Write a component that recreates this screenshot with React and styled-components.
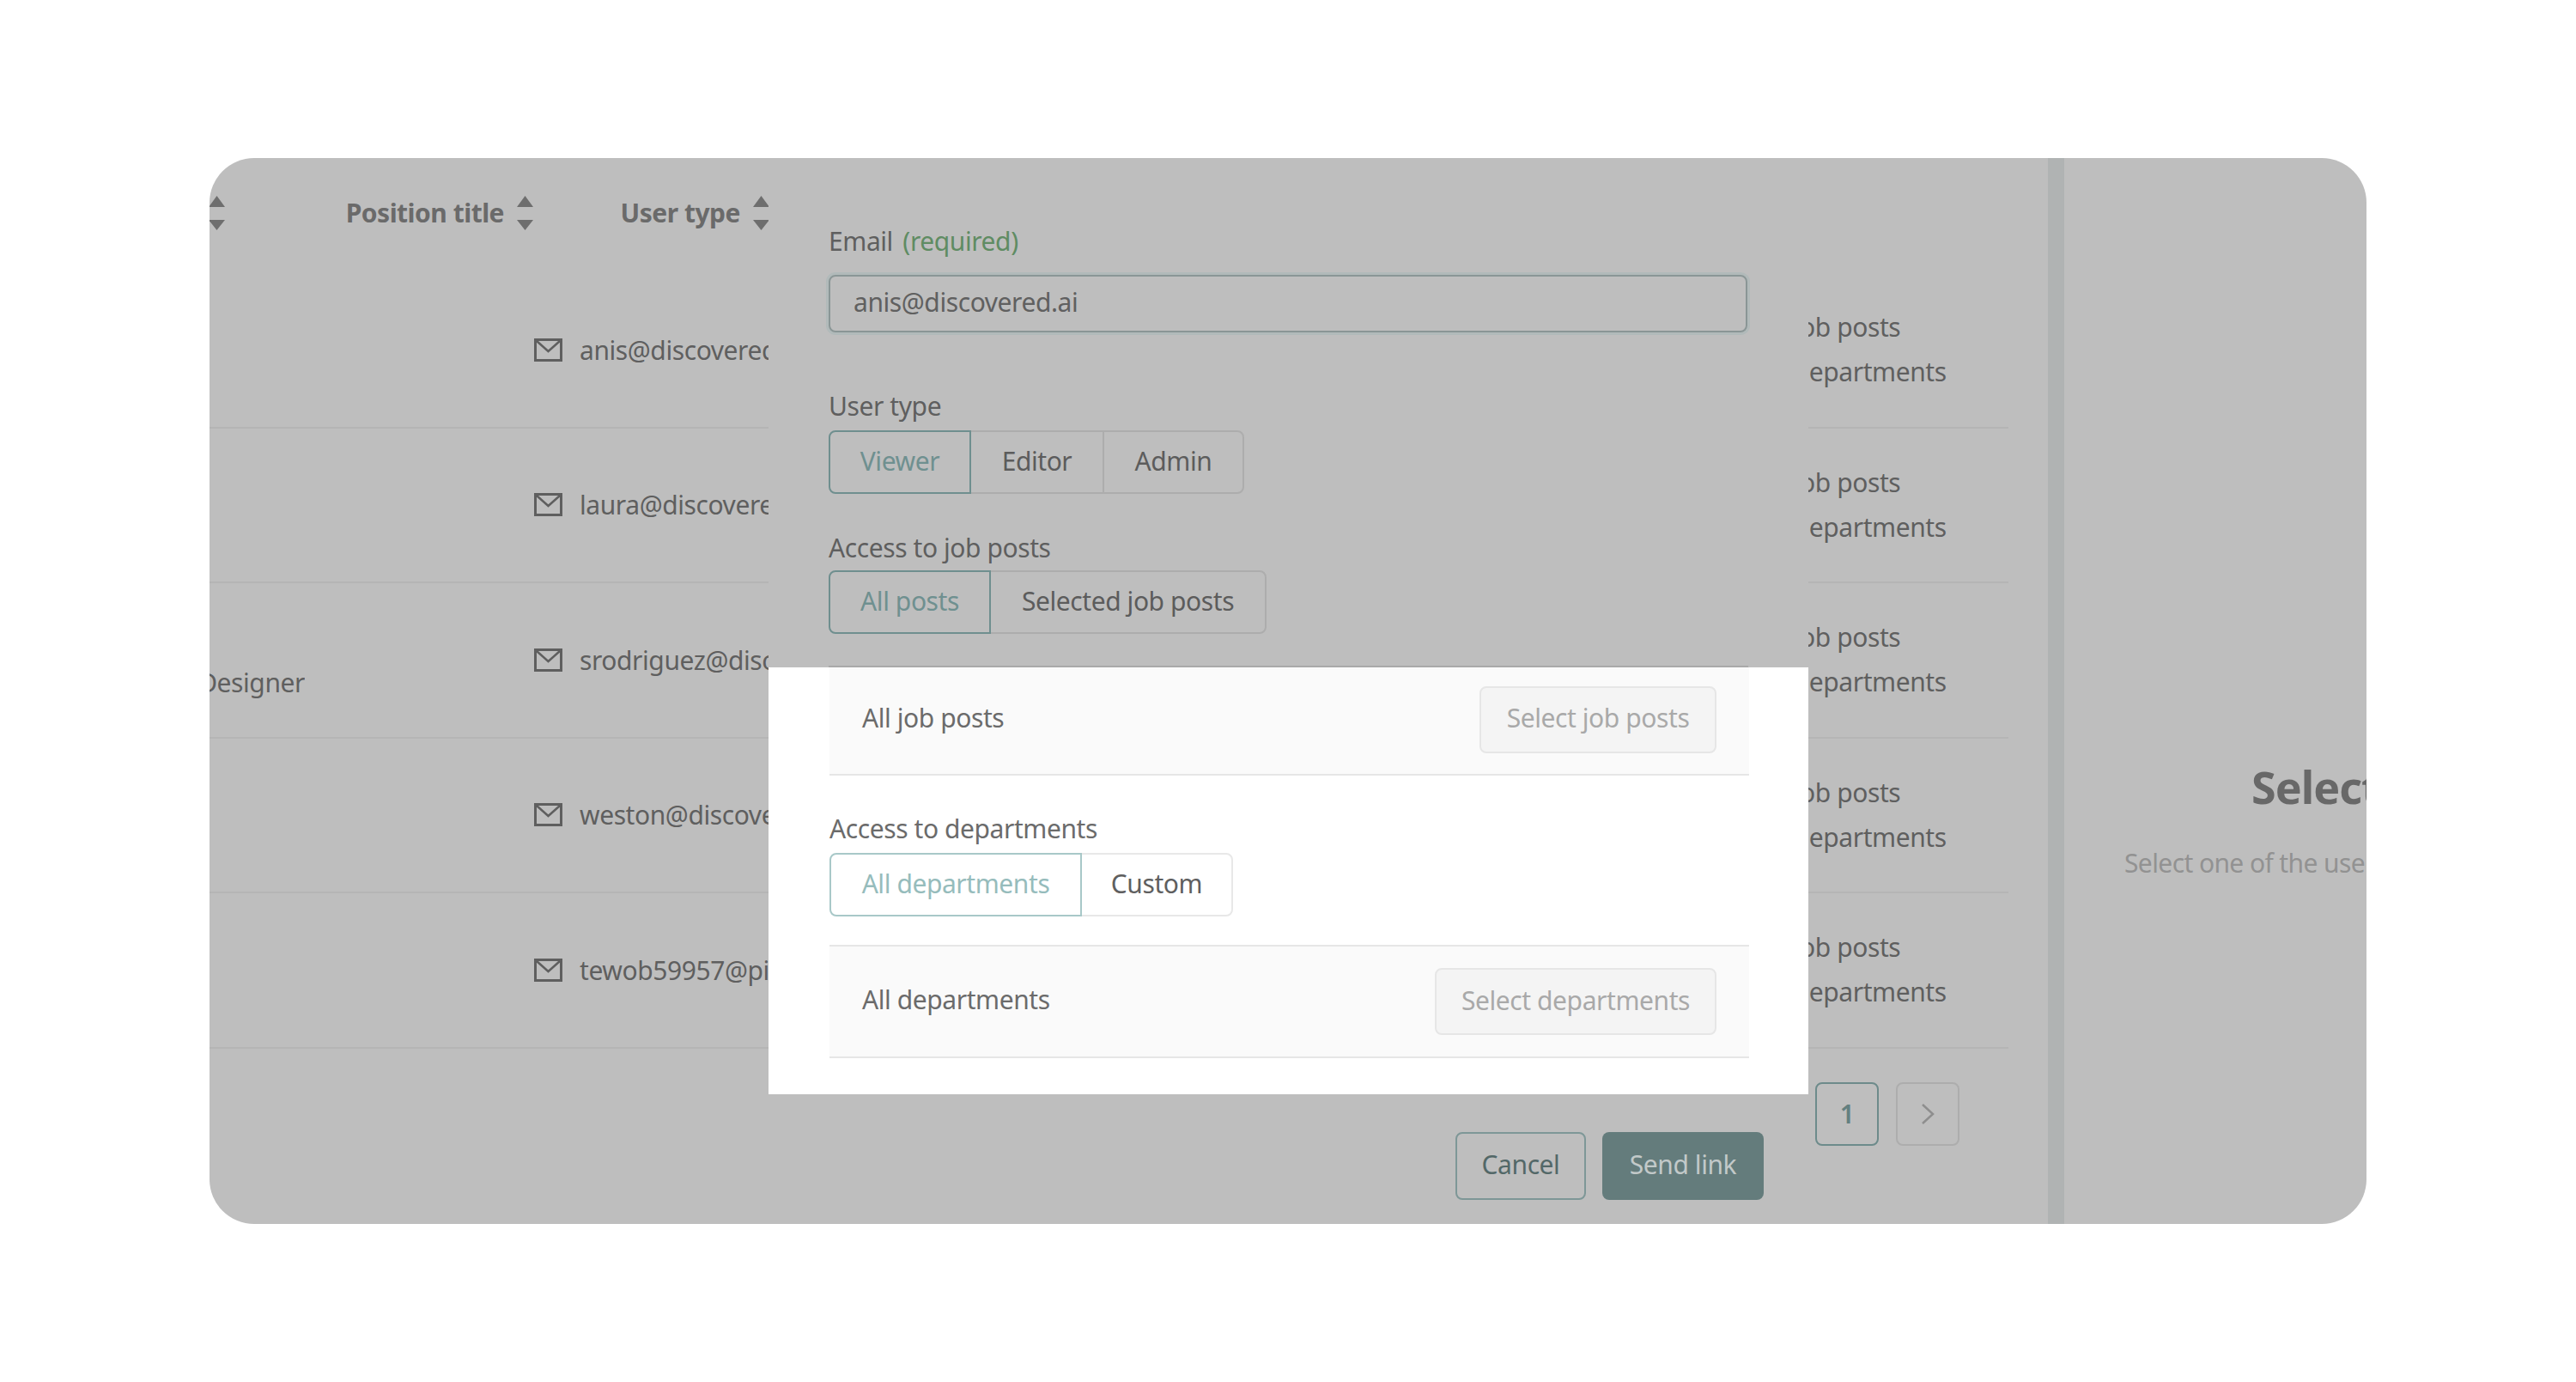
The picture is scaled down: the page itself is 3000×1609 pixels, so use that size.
import React from "react";
import styled, { createGlobalStyle } from "styled-components";

const Global = createGlobalStyle`
  html, body { margin: 0; padding: 0; background: #fff; }
  body { font-family: "Noto Sans", "Open Sans", sans-serif; font-size: 30px; letter-spacing: -0.42px; }
  * { box-sizing: border-box; }
`;

const Page = styled.div`
  width: 3000px;
  height: 1609px;
  padding: 184px 244px 0;
`;

const Card = styled.div`
  position: relative;
  display: flex;
  width: 2512px;
  height: 1241px;
  border-radius: 52px;
  overflow: hidden;
  background: #bebebe;
  color: #5f5f5f;
`;

const TablePane = styled.div`
  width: 2141px;
  flex: none;
  display: flex;
  flex-direction: column;
`;

const Strip = styled.div`
  width: 19px;
  flex: none;
  background: #b0b3b3;
`;

const DetailPane = styled.div`
  flex: 1;
  min-width: 0;
  overflow: hidden;
  white-space: nowrap;
  padding: 702px 0 0 70px;
`;

const DetailTitle = styled.div`
  font-size: 52px;
  font-weight: 700;
  line-height: 60px;
  letter-spacing: -1px;
  color: #686868;
  margin-left: 148px;
`;

const DetailText = styled.div`
  font-size: 30px;
  line-height: 44px;
  letter-spacing: -0.6px;
  color: #929292;
  margin-top: 37px;
`;

const HeaderRow = styled.div`
  height: 134px;
  padding-bottom: 7px;
  display: grid;
  grid-template-columns: 18px 359px 275px;
  align-items: center;
`;

const HeaderCell = styled.div`
  display: flex;
  justify-content: flex-end;
  align-items: center;
  gap: 15px;
  min-width: 0;
  font-weight: 700;
  white-space: nowrap;
  letter-spacing: -0.5px;
  color: #6a6a6a;
`;

const Row = styled.div`
  width: 2095px;
  height: 180.5px;
  display: flex;
  align-items: center;
  border-bottom: 2px solid #b5b5b5;
`;

const RoleCell = styled.div`
  width: 378px;
  flex: none;
`;

const RoleText = styled.div`
  width: 111px;
  display: flex;
  justify-content: flex-end;
  overflow: hidden;
  white-space: nowrap;
  padding-top: 52px;
`;

const EmailCell = styled.div`
  width: 1426px;
  flex: none;
  display: flex;
  align-items: center;
  gap: 20px;
  white-space: nowrap;
`;

const AccessCell = styled.div`
  line-height: 52px;
  white-space: nowrap;
`;

const Pager = styled.div`
  display: flex;
  justify-content: flex-end;
  gap: 20px;
  margin-top: 39px;
  padding-right: 103px;
`;

const PageButton = styled.div`
  width: 74px;
  height: 74px;
  display: flex;
  align-items: center;
  justify-content: center;
  border-radius: 8px;
  border: 2px solid ${(p) => (p.$active ? "#6d8b8b" : "#adadad")};
  color: #648080;
  font-weight: 600;
`;

const Modal = styled.div`
  position: absolute;
  left: 651px;
  top: 0;
  bottom: 0;
  width: 1211px;
  display: flex;
  flex-direction: column;
`;

const ModalTop = styled.div`
  height: 593px;
  flex: none;
  display: flex;
  flex-direction: column;
  align-items: flex-start;
  padding: 75px 71px 0 70px;
  background: #bebebe;
`;

const ModalMiddle = styled.div`
  height: 497px;
  flex: none;
  padding: 0 69px 0 71px;
  background: #fff;
  color: #6b6b6b;
`;

const ModalBottom = styled.div`
  flex: 1;
  display: flex;
  justify-content: flex-end;
  align-items: flex-start;
  gap: 19px;
  padding: 44px 52px 0 0;
  background: #bebebe;
`;

const Label = styled.div`
  line-height: 44px;
  height: 44px;
  padding-bottom: 4px;
  margin-top: ${(p) => p.$gap || 0}px;
  white-space: nowrap;
`;

const Required = styled.span`
  margin-left: 4px;
  color: #5f8c63;
`;

const EmailInput = styled.div`
  width: 100%;
  height: 67px;
  margin-top: 17px;
  display: flex;
  align-items: center;
  padding: 0 27px 5px;
  border: 2px solid #8a9696;
  border-radius: 8px;
  box-shadow: 0 0 0 3px #b1baba;
  color: #606060;
`;

const Segments = styled.div`
  display: flex;
  margin-top: ${(p) => p.$gap}px;
`;

const Segment = styled.div`
  width: ${(p) => p.$w}px;
  height: 74px;
  flex: none;
  display: flex;
  align-items: center;
  justify-content: center;
  padding-bottom: 4px;
  margin-left: -2px;
  border: 2px solid ${(p) => (p.$active ? (p.$light ? "#a8c8c8" : "#6f8f8f") : p.$light ? "#e8e8e8" : "#adadad")};
  color: ${(p) => (p.$active ? (p.$light ? "#96bcbc" : "#6f9090") : p.$light ? "#5f5f5f" : "#5c5c5c")};
  position: relative;
  z-index: ${(p) => (p.$active ? 1 : 0)};
  &:first-child { margin-left: 0; border-radius: 8px 0 0 8px; }
  &:last-child { border-radius: 0 8px 8px 0; }
`;

const DimRule = styled.div`
  width: 1071px;
  height: 2px;
  margin-top: auto;
  background: #a9a9a9;
`;

const Panel = styled.div`
  height: ${(p) => p.$h}px;
  margin-top: ${(p) => p.$gap || 0}px;
  display: flex;
  align-items: center;
  justify-content: space-between;
  padding: 0 38px ${(p) => p.$lift || 0}px 38px;
  background: #fafafa;
  border-top: ${(p) => (p.$ruled ? "2px solid #e6e6e6" : "0")};
  border-bottom: 2px solid #e6e6e6;
`;

const PanelText = styled.span`
  padding-bottom: 5px;
`;

const SelectButton = styled.div`
  width: ${(p) => p.$w}px;
  height: 78px;
  display: flex;
  align-items: center;
  justify-content: center;
  padding-bottom: 4px;
  background: #f4f4f4;
  border: 2px solid #e6e6e6;
  border-radius: 8px;
  color: #a9a9a9;
`;

const CancelButton = styled.div`
  width: 152px;
  height: 79px;
  display: flex;
  align-items: center;
  justify-content: center;
  padding-bottom: 5px;
  border: 2px solid #7e9797;
  border-radius: 8px;
  color: #536868;
`;

const SendButton = styled.div`
  width: 188px;
  height: 79px;
  display: flex;
  align-items: center;
  justify-content: center;
  padding-bottom: 5px;
  border-radius: 8px;
  background: #647c7c;
  color: #c2c9c9;
`;

const SortIcon = () => (
  <svg width="19" height="40" viewBox="0 0 19 40" style={{ flex: "none" }}>
    <path d="M9.5 0 19 13H0z" fill="#6e6e6e" />
    <path d="M0 28h19L9.5 40z" fill="#6e6e6e" />
  </svg>
);

const MailIcon = () => (
  <svg width="33" height="27" viewBox="0 0 33 27" style={{ flex: "none" }} fill="none">
    <rect x="1.5" y="1.5" width="30" height="24" stroke="#5f5f5f" strokeWidth="3" />
    <path d="M3 3l13.5 12L30 3" stroke="#5f5f5f" strokeWidth="2.5" />
  </svg>
);

const Chevron = () => (
  <svg width="18" height="26" viewBox="0 0 18 26" fill="none">
    <path d="M3 2l12 11L3 24" stroke="#8e8e8e" strokeWidth="2.5" />
  </svg>
);

const users = [
  { email: "anis@discovered.ai" },
  { email: "laura@discovered.ai" },
  { email: "srodriguez@discovered.ai", role: "Designer" },
  { email: "weston@discovered.ai" },
  { email: "tewob59957@pixiekd.com" },
];

export default function App() {
  return (
    <Page>
      <Global />
      <Card>
        <TablePane>
          <HeaderRow>
            <HeaderCell><SortIcon /></HeaderCell>
            <HeaderCell>Position title<SortIcon /></HeaderCell>
            <HeaderCell>User type<SortIcon /></HeaderCell>
          </HeaderRow>
          {users.map((u) => (
            <Row key={u.email}>
              <RoleCell>{u.role && <RoleText>{u.role}</RoleText>}</RoleCell>
              <EmailCell><MailIcon />{u.email}</EmailCell>
              <AccessCell>All job posts<br />All departments</AccessCell>
            </Row>
          ))}
          <Pager>
            <PageButton $active>1</PageButton>
            <PageButton><Chevron /></PageButton>
          </Pager>
        </TablePane>
        <Strip />
        <DetailPane>
          <DetailTitle>Select a user</DetailTitle>
          <DetailText>Select one of the users to see their details</DetailText>
        </DetailPane>

        <Modal>
          <ModalTop>
            <Label>Email <Required>(required)</Required></Label>
            <EmailInput>anis@discovered.ai</EmailInput>
            <Label $gap={64}>User type</Label>
            <Segments $gap={6}>
              <Segment $w={166} $active>Viewer</Segment>
              <Segment $w={157}>Editor</Segment>
              <Segment $w={165}>Admin</Segment>
            </Segments>
            <Label $gap={41}>Access to job posts</Label>
            <Segments $gap={4}>
              <Segment $w={189} $active>All posts</Segment>
              <Segment $w={323}>Selected job posts</Segment>
            </Segments>
            <DimRule />
          </ModalTop>
          <ModalMiddle>
            <Panel $h={126} $lift={3}>
              <PanelText>All job posts</PanelText>
              <SelectButton $w={276}>Select job posts</SelectButton>
            </Panel>
            <Label $gap={40}>Access to departments</Label>
            <Segments $gap={6}>
              <Segment $w={294} $active $light>All departments</Segment>
              <Segment $w={178} $light>Custom</Segment>
            </Segments>
            <Panel $h={132} $gap={33} $ruled>
              <PanelText>All departments</PanelText>
              <SelectButton $w={328}>Select departments</SelectButton>
            </Panel>
          </ModalMiddle>
          <ModalBottom>
            <CancelButton>Cancel</CancelButton>
            <SendButton>Send link</SendButton>
          </ModalBottom>
        </Modal>
      </Card>
    </Page>
  );
}
